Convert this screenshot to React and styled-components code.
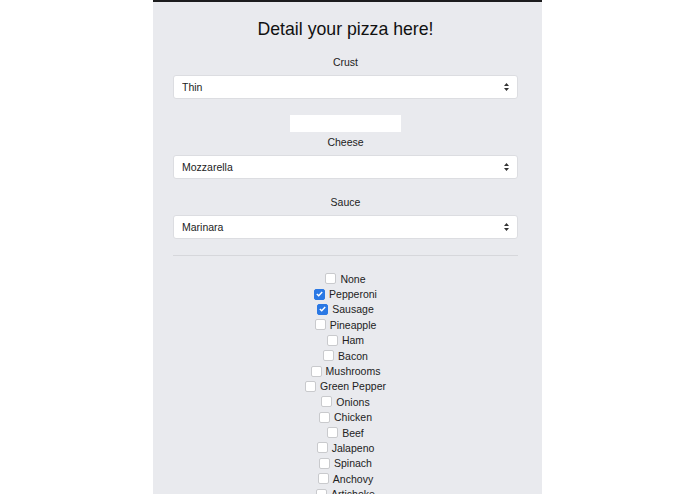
import React, { useState } from 'react';
import styled, { createGlobalStyle } from 'styled-components';

const GlobalStyle = createGlobalStyle`
    html, body {
        margin: 0;
        padding: 0;
        background: #ffffff;
        font-family: "Liberation Sans", Arial, sans-serif;
    }
`;

const Page = styled.div`
    display: flex;
    justify-content: center;
    height: 494px;
    overflow: hidden;
`;

const Panel = styled.form`
    width: 389px;
    box-sizing: border-box;
    background-color: #e9eaee;
    border-top: 2px solid #1c1c1e;
    padding: 15px 24px 0 20px;
    display: flex;
    flex-direction: column;
    align-items: center;
`;

const Title = styled.h1`
    margin: 0 0 14px;
    font-size: 17.7px;
    line-height: 24px;
    font-weight: 400;
    color: #111;
`;

const FieldLabel = styled.label`
    display: block;
    font-size: 10.5px;
    line-height: 14px;
    color: #222;
    margin-bottom: 6px;
`;

const SelectWrap = styled.div`
    position: relative;
    width: 345px;
    margin-bottom: ${p => p.$gap || 16}px;
`;

const Select = styled.select`
    appearance: none;
    -webkit-appearance: none;
    width: 100%;
    height: 24px;
    box-sizing: border-box;
    padding: 0 24px 0 8px;
    border: 1px solid #dcdde1;
    border-radius: 3px;
    background: #fff;
    font-family: "Liberation Sans", Arial, sans-serif;
    font-size: 10.5px;
    color: #222;
    outline: none;
`;

const Arrows = styled.svg`
    position: absolute;
    right: 9px;
    top: 8px;
    pointer-events: none;
`;

const NoteInput = styled.input`
    width: 111px;
    height: 18px;
    box-sizing: border-box;
    border: none;
    background: #fff;
    margin-bottom: 3px;
    outline: none;
`;

const Divider = styled.hr`
    width: 345px;
    border: none;
    border-top: 1px solid #d6d7db;
    margin: 0 0 15px;
`;

const Toppings = styled.div`
    display: flex;
    flex-direction: column;
    align-items: center;
`;

const ToppingRow = styled.label`
    display: flex;
    align-items: center;
    gap: 4px;
    height: 15.4px;
    font-size: 10.5px;
    color: #222;
`;

const Box = styled.span`
    width: 9px;
    height: 9px;
    border-radius: 2px;
    border: 1px solid ${p => (p.$checked ? '#2a78e4' : '#c9cacd')};
    background: ${p => (p.$checked ? '#2a78e4' : '#fff')};
    display: flex;
    align-items: center;
    justify-content: center;
`;

const CRUSTS = ['Thin', 'Regular', 'Thick', 'Stuffed'];
const CHEESES = ['Mozzarella', 'Cheddar', 'Provolone', 'None'];
const SAUCES = ['Marinara', 'BBQ', 'Alfredo', 'Pesto'];
const TOPPINGS = [
    'None', 'Pepperoni', 'Sausage', 'Pineapple', 'Ham', 'Bacon', 'Mushrooms',
    'Green Pepper', 'Onions', 'Chicken', 'Beef', 'Jalapeno', 'Spinach', 'Anchovy', 'Artichoke'
];

const Dropdown = ({ value, options, onChange, gap }) => (
    <SelectWrap $gap={gap}>
        <Select value={value} onChange={onChange}>
            {options.map(o => <option key={o}>{o}</option>)}
        </Select>
        <Arrows width="5" height="8" viewBox="0 0 5 8">
            <path d="M0 3 L2.5 0 L5 3 Z M0 5 L2.5 8 L5 5 Z" fill="#333" />
        </Arrows>
    </SelectWrap>
);

export default function App() {
    const [data, setData] = useState({ crust: 'Thin', cheese: 'Mozzarella', sauce: 'Marinara' });
    const [picked, setPicked] = useState(['Pepperoni', 'Sausage']);

    const toggle = t => {
        setPicked(picked.includes(t) ? picked.filter(x => x !== t) : [...picked, t]);
    };

    return (
        <Page>
            <GlobalStyle />
            <Panel onSubmit={e => e.preventDefault()}>
                <Title>Detail your pizza here!</Title>
                <FieldLabel>Crust</FieldLabel>
                <Dropdown value={data.crust} options={CRUSTS} onChange={e => setData({ ...data, crust: e.target.value })} />
                <NoteInput type="text" />
                <FieldLabel>Cheese</FieldLabel>
                <Dropdown value={data.cheese} options={CHEESES} onChange={e => setData({ ...data, cheese: e.target.value })} />
                <FieldLabel>Sauce</FieldLabel>
                <Dropdown value={data.sauce} options={SAUCES} onChange={e => setData({ ...data, sauce: e.target.value })} />
                <Divider />
                <Toppings>
                    {TOPPINGS.map(t => {
                        const checked = picked.includes(t);
                        return (
                            <ToppingRow key={t} onClick={() => toggle(t)}>
                                <Box $checked={checked}>
                                    {checked && (
                                        <svg width="7" height="6" viewBox="0 0 7 6">
                                            <path d="M0.8 3 L2.7 4.8 L6.2 1" stroke="#fff" strokeWidth="1.4" fill="none" />
                                        </svg>
                                    )}
                                </Box>
                                {t}
                            </ToppingRow>
                        );
                    })}
                </Toppings>
            </Panel>
        </Page>
    );
}
